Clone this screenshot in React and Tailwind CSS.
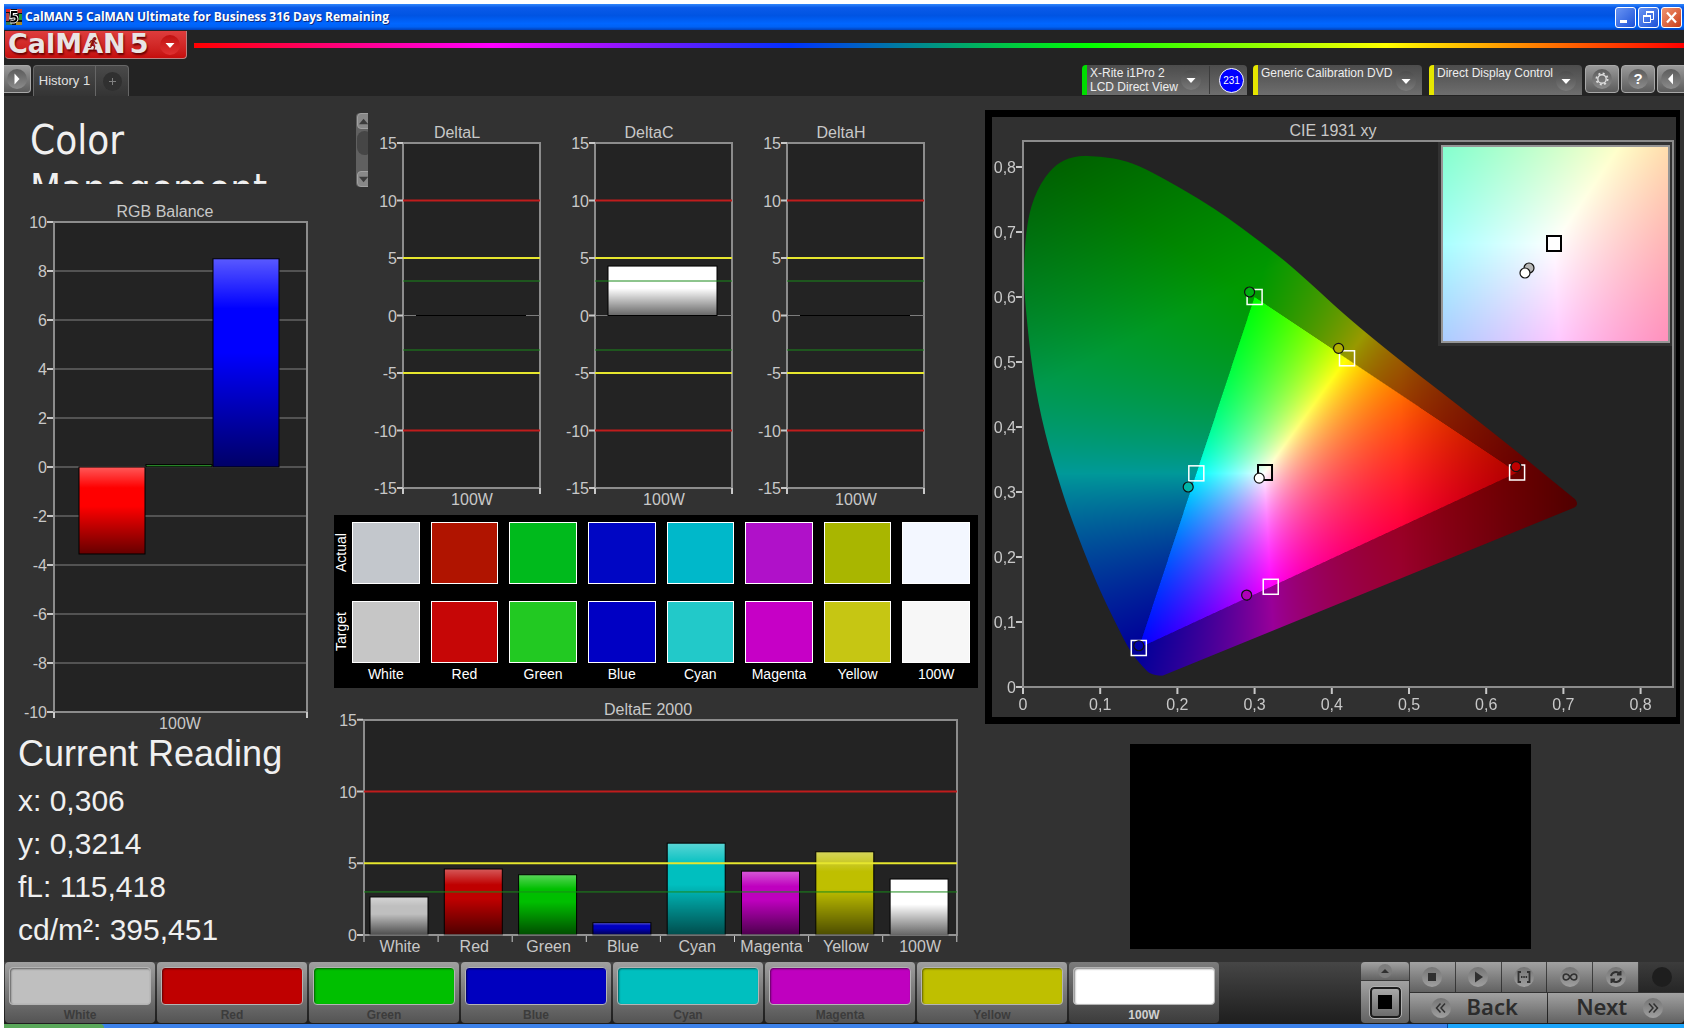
import React, { useEffect, useRef, useState } from 'react';

const UI_FONT = '"Liberation Sans", Arial, sans-serif';

const PATCHES = [
  { name: 'White', actual: 'bg-[#c3c7cc]', target: 'bg-[#c6c6c6]', bar: 'bg-[#bfbfbf]', color: '#bfbfbf', deltaE: 2.65 },
  { name: 'Red', actual: 'bg-[#b01400]', target: 'bg-[#c60606]', bar: 'bg-[#bf0000]', color: '#bf0000', deltaE: 4.6 },
  { name: 'Green', actual: 'bg-[#00ba1c]', target: 'bg-[#22c922]', bar: 'bg-[#00bf00]', color: '#00bf00', deltaE: 4.2 },
  { name: 'Blue', actual: 'bg-[#0006c4]', target: 'bg-[#0000c4]', bar: 'bg-[#0000bf]', color: '#0000bf', deltaE: 0.86 },
  { name: 'Cyan', actual: 'bg-[#00b8ca]', target: 'bg-[#22c9c9]', bar: 'bg-[#00bfbf]', color: '#00bfbf', deltaE: 6.4 },
  { name: 'Magenta', actual: 'bg-[#b011c9]', target: 'bg-[#c600c6]', bar: 'bg-[#bf00bf]', color: '#bf00bf', deltaE: 4.45 },
  { name: 'Yellow', actual: 'bg-[#a9b600]', target: 'bg-[#c6c613]', bar: 'bg-[#bfbf00]', color: '#bfbf00', deltaE: 5.8 },
  { name: '100W', actual: 'bg-[#f3f7ff]', target: 'bg-[#f7f7f7]', bar: 'bg-white', color: '#ffffff', deltaE: 3.9 },
];

const READINGS = [
  ['x:', '0,306'],
  ['y:', '0,3214'],
  ['fL:', '115,418'],
  ['cd/m²:', '395,451'],
];

const LIMITS = [
  { value: 10, color: '#c01c1c', width: 2 },
  { value: 5, color: '#e6e62e', width: 2 },
  { value: 3, color: '#1a8a1a', width: 1 },
];

// ---------- charts ----------

const Bar = ({ x, y, width, height, color, id }) => (
  <g>
    <defs>
      <linearGradient id={id} x1="0" y1="0" x2="0" y2="1">
        <stop offset="0" stopColor="#fff" stopOpacity="0.35" />
        <stop offset="0.24" stopColor="#fff" stopOpacity="0" />
        <stop offset="0.45" stopColor="#000" stopOpacity="0" />
        <stop offset="1" stopColor="#000" stopOpacity="0.6" />
      </linearGradient>
    </defs>
    <rect x={x} y={y} width={width} height={height} fill={color} />
    <rect x={x} y={y} width={width} height={height} fill={`url(#${id})`} stroke="#000" strokeWidth="1" />
  </g>
);

const YAxis = ({ ticks, left, toY }) => (
  <g>
    {ticks.map((t) => (
      <g key={t}>
        <line x1={left - 6} x2={left} y1={toY(t)} y2={toY(t)} stroke="#c8c8c8" strokeWidth="2" />
        <text x={left - 6} y={toY(t) + 6} textAnchor="end">{String(t).replace('.', ',')}</text>
      </g>
    ))}
  </g>
);

const Chart = ({ width, height, label, children }) => (
  <svg viewBox={`0 0 ${width} ${height}`} className="block w-full" role="img" aria-label={label} fontFamily={UI_FONT} fontSize="16" fill="#c8c8c8">
    {children}
  </svg>
);

const RgbBalance = () => {
  const toY = (v) => 283 - v * 24.5;
  const bars = [
    { id: 'rgb-r', x: 75, value: -3.55, color: '#ff0000' },
    { id: 'rgb-g', x: 142, value: 0.1, color: '#2a8a2a' },
    { id: 'rgb-b', x: 209, value: 8.5, color: '#0000ff' },
  ];
  return (
    <Chart width={330} height={548} label="RGB Balance">
      <text x="161" y="33" textAnchor="middle">RGB Balance</text>
      <rect x="50" y="38" width="253" height="490" fill="#232323" />
      {[8, 6, 4, 2, 0, -2, -4, -6, -8].map((v) => (
        <line key={v} x1="50" x2="303" y1={toY(v)} y2={toY(v)} stroke="#848484" strokeWidth="1" />
      ))}
      <rect x="50" y="38" width="253" height="490" fill="none" stroke="#8c8c8c" strokeWidth="2" />
      <YAxis ticks={[10, 8, 6, 4, 2, 0, -2, -4, -6, -8, -10]} left={49} toY={toY} />
      {bars.map((b) => (
        <Bar key={b.id} id={b.id} x={b.x} width={66} color={b.color} y={Math.min(toY(b.value), toY(0))} height={Math.abs(b.value) * 24.5} />
      ))}
      <path d="M50 528v6M303 528v6" stroke="#c8c8c8" strokeWidth="2" />
      <text x="176" y="545" textAnchor="middle">100W</text>
    </Chart>
  );
};

const DeltaChart = ({ title, value }) => {
  const toY = (v) => 219.5 - v * 11.5;
  return (
    <div className="flex-1">
      <Chart width={192} height={419} label={title}>
        <text x="89" y="42" textAnchor="middle">{title}</text>
        <rect x="35" y="47" width="137" height="345" fill="#232323" stroke="#8c8c8c" strokeWidth="2" />
        <line x1="35" x2="172" y1={toY(0)} y2={toY(0)} stroke="#7c7c7c" />
        <YAxis ticks={[15, 10, 5, 0, -5, -10, -15]} left={35} toY={toY} />
        {value > 0 ? (
          <Bar id={`bar-${title}`} x={48} width={109} color="#fff" y={toY(value)} height={value * 11.5} />
        ) : (
          <line x1="48" x2="158" y1={toY(0)} y2={toY(0)} stroke="#000" strokeWidth="1" />
        )}
        {LIMITS.map((l) => (
          <g key={l.value} stroke={l.color} strokeWidth={l.width}>
            <line x1="35" x2="172" y1={toY(l.value)} y2={toY(l.value)} />
            <line x1="35" x2="172" y1={toY(-l.value)} y2={toY(-l.value)} />
          </g>
        ))}
        <path d="M35 392v6M172 392v6" stroke="#c8c8c8" strokeWidth="2" />
        <text x="104" y="409" textAnchor="middle">100W</text>
      </Chart>
    </div>
  );
};

const DeltaE = () => {
  const toY = (v) => 247 - v * 14.35;
  return (
    <Chart width={651} height={274} label="DeltaE 2000">
      <text x="314" y="27" textAnchor="middle">DeltaE 2000</text>
      <rect x="30" y="32" width="593" height="215" fill="#232323" stroke="#8c8c8c" strokeWidth="2" />
      <YAxis ticks={[15, 10, 5, 0]} left={29} toY={toY} />
      {PATCHES.map((p, i) => (
        <g key={p.name}>
          <Bar id={`de-${p.name}`} x={36 + i * 74.3} width={58} color={p.color} y={toY(p.deltaE)} height={p.deltaE * 14.35} />
          <text x={66 + i * 74.3} y="264" textAnchor="middle">{p.name}</text>
        </g>
      ))}
      <line x1="30" x2="623" y1="247" y2="247" stroke="#9c9c9c" />
      {LIMITS.map((l) => (
        <line key={l.value} x1="30" x2="623" y1={toY(l.value)} y2={toY(l.value)} stroke={l.color} strokeWidth={l.width} />
      ))}
      {[0, 1, 2, 3, 4, 5, 6, 7, 8].map((i) => (
        <line key={i} x1={30 + i * 74.1} x2={30 + i * 74.1} y1="248" y2="254" stroke="#c8c8c8" strokeWidth="1" />
      ))}
    </Chart>
  );
};

// ---------- chromaticity ----------

// horseshoe outline, xy coordinates, from the blue end round to the red end
const LOCUS = [
  [0.181, 0.0175], [0.167, 0.0175], [0.155, 0.031], [0.1385, 0.055], [0.1185, 0.102], [0.099, 0.15], [0.08, 0.205],
  [0.0655, 0.25], [0.052, 0.295], [0.028, 0.39], [0.012, 0.485], [0.003, 0.5877], [0.0005, 0.64], [0.005, 0.716],
  [0.0175, 0.765], [0.04, 0.803], [0.067, 0.8175], [0.1, 0.8165], [0.133, 0.81], [0.1665, 0.793], [0.2485, 0.737],
  [0.3186, 0.675], [0.3536, 0.6415], [0.441, 0.546], [0.611, 0.39], [0.715, 0.289],
];

const TARGETS = [[0.3, 0.6], [0.4197, 0.5057], [0.2245, 0.3287], [0.64, 0.33], [0.3209, 0.1542], [0.15, 0.06]];

const MEASURED = [
  { x: 0.2935, y: 0.6077, color: '#00ae10' },
  { x: 0.4088, y: 0.521, color: '#b0b000' },
  { x: 0.214, y: 0.3077, color: '#00b4a8' },
  { x: 0.6386, y: 0.339, color: '#bf0000' },
  { x: 0.2897, y: 0.1415, color: '#b000b8' },
  { x: 0.15, y: 0.0635, color: '#0000a8' },
  { x: 0.306, y: 0.3214, color: '#ffffff' },
];

const chromaColor = (x, y) => {
  const z = 1 - x - y;
  let r = 3.2406 * x - 1.5372 * y - 0.4986 * z;
  let g = -0.9689 * x + 1.8758 * y + 0.0415 * z;
  let b = 0.0557 * x - 0.204 * y + 1.057 * z;
  // outside Rec.709 the colour is clipped and dimmed
  const dim = r < 0 || g < 0 || b < 0 ? 0.6 : 1;
  r = Math.max(0, r);
  g = Math.max(0, g);
  b = Math.max(0, b);
  const redFall = Math.max(0, x - 0.49) * 2.1;
  const greenFall = Math.max(0, y - x * 0.6 - 0.45) * 1.1;
  const k = (255 * dim * (1 - redFall) * (1 - greenFall)) / Math.max(r, g, b);
  return [r * k, g * k, b * k];
};

const ChromaField = ({ width, height, xRange, yRange, locus }) => {
  const ref = useRef(null);

  useEffect(() => {
    const canvas = ref.current;
    const w = canvas.width;
    const h = canvas.height;
    const ctx = canvas.getContext('2d');
    const img = ctx.createImageData(w, h);
    for (let j = 0; j < h; j++) {
      const y = yRange[1] - ((j + 0.5) / h) * (yRange[1] - yRange[0]);
      for (let i = 0; i < w; i++) {
        const x = xRange[0] + ((i + 0.5) / w) * (xRange[1] - xRange[0]);
        const c = chromaColor(x, y);
        const o = (j * w + i) * 4;
        img.data[o] = c[0];
        img.data[o + 1] = c[1];
        img.data[o + 2] = c[2];
        img.data[o + 3] = 255;
      }
    }
    ctx.putImageData(img, 0, 0);

    if (locus) {
      const pts = locus.map(([x, y]) => [
        ((x - xRange[0]) / (xRange[1] - xRange[0])) * w,
        ((yRange[1] - y) / (yRange[1] - yRange[0])) * h,
      ]);
      ctx.globalCompositeOperation = 'destination-in';
      ctx.beginPath();
      ctx.moveTo(pts[0][0], pts[0][1]);
      for (let i = 1; i < pts.length - 1; i++) {
        const mx = (pts[i][0] + pts[i + 1][0]) / 2;
        const my = (pts[i][1] + pts[i + 1][1]) / 2;
        ctx.quadraticCurveTo(pts[i][0], pts[i][1], mx, my);
      }
      const last = pts[pts.length - 1];
      ctx.lineTo(last[0], last[1]);
      ctx.quadraticCurveTo(last[0] + 10, last[1] + 12, last[0] - 4, last[1] + 18);
      ctx.closePath();
      ctx.fill();
    }
  }, [xRange, yRange, locus]);

  return <canvas ref={ref} width={width * 2} height={height * 2} className="block h-full w-full" />;
};

const PLOT_X = [0, 0.842];
const PLOT_Y = [0, 0.84];
const INSET_X = [0.287, 0.339];
const INSET_Y = [0.3039, 0.3539];

const CieChart = () => {
  const toX = (x) => 31 + x * 772;
  const toY = (y) => 570 - y * 650;
  return (
    <Chart width={684} height={600} label="CIE 1931 xy">
      <text x="341" y="19" textAnchor="middle">CIE 1931 xy</text>
      <rect x="31" y="24" width="650" height="546" fill="#232323" stroke="#8c8c8c" strokeWidth="2" />
      <foreignObject x="31" y="24" width="650" height="546">
        <ChromaField width={650} height={546} xRange={PLOT_X} yRange={PLOT_Y} locus={LOCUS} />
      </foreignObject>
      <path d="M31 570H681" stroke="#8c8c8c" strokeWidth="2" />
      <YAxis ticks={[0.8, 0.7, 0.6, 0.5, 0.4, 0.3, 0.2, 0.1, 0]} left={30} toY={toY} />
      {[0, 0.1, 0.2, 0.3, 0.4, 0.5, 0.6, 0.7, 0.8].map((v) => (
        <g key={v}>
          <line x1={toX(v)} x2={toX(v)} y1="571" y2="577" stroke="#c8c8c8" strokeWidth="2" />
          <text x={toX(v)} y="593" textAnchor="middle">{String(v).replace('.', ',')}</text>
        </g>
      ))}

      {TARGETS.map(([x, y]) => (
        <rect key={x} x={toX(x) - 7.5} y={toY(y) - 7.5} width="15" height="15" fill="none" stroke="#fff" strokeWidth="1.5" />
      ))}
      <rect x={toX(0.3135) - 7} y={toY(0.33) - 7.5} width="14" height="15" fill="none" stroke="#000" strokeWidth="2" />
      {MEASURED.map((m) => (
        <circle key={m.x} cx={toX(m.x)} cy={toY(m.y)} r="5" fill={m.color} stroke="#111" strokeWidth="1.2" />
      ))}

      {/* magnified view round the white point */}
      <rect x="446" y="25" width="234" height="204" fill="#323232" />
      <foreignObject x="450" y="29" width="227" height="196">
        <ChromaField width={227} height={196} xRange={INSET_X} yRange={INSET_Y} />
      </foreignObject>
      <rect x="450" y="29" width="227" height="196" fill="none" stroke="#969696" strokeWidth="2" />
      <rect x="555" y="119" width="14" height="15" fill="#fff" stroke="#000" strokeWidth="2" />
      <circle cx="537" cy="151" r="5" fill="#b8b8b8" stroke="#111" strokeWidth="1.2" />
      <circle cx="533" cy="156" r="5" fill="#fff" stroke="#111" strokeWidth="1.2" />
    </Chart>
  );
};

// ---------- window chrome ----------

const TitleBar = () => (
  <header className="flex h-[26px] items-center justify-between bg-[linear-gradient(#2f86fb_0%,#0a5ae8_14%,#0054e3_45%,#0066ff_75%,#0062f5_88%,#0040b8_100%)] pl-0.5 pr-0.5">
    <div className="flex items-center gap-[3px]">
      <svg width="16" height="16" viewBox="0 0 16 16">
        <rect width="16" height="16" fill="#111" />
        <path d="M0 0h5v3H0z" fill="#d22" />
        <path d="M11 0h5v4h-5z" fill="#c33" />
        <path d="M0 4h3v8H0z" fill="#b44" />
        <path d="M13 5h3v6h-3z" fill="#293" />
        <path d="M0 13h6v3H0z" fill="#375" />
        <path d="M10 13h6v3h-6z" fill="#a82" />
        <path d="M11.500 3H6L5.500 7.800Q10.500 6.400 10.500 10 10.500 13.200 4.500 12.500" fill="none" stroke="#fff" strokeWidth="4" />
        <path d="M11.500 3H6L5.500 7.800Q10.500 6.400 10.500 10 10.500 13.200 4.500 12.500" fill="none" stroke="#000" strokeWidth="2" />
      </svg>
      <h1 className="font-['Open_Sans',sans-serif] text-xs font-bold text-white [text-shadow:1px_1px_#0a2a80]">
        CalMAN 5 CalMAN Ultimate for Business 316 Days Remaining
      </h1>
    </div>
    <div className="flex gap-0.5">
      <button type="button" aria-label="Minimize" className="h-[21px] w-[21px] rounded-[3px] border border-white bg-linear-to-br from-[#6a94f2] to-[#1c50d8]">
        <svg viewBox="0 0 19 19"><path d="M4 12h7v3H4z" fill="#fff" /></svg>
      </button>
      <button type="button" aria-label="Restore" className="h-[21px] w-[21px] rounded-[3px] border border-white bg-linear-to-br from-[#6a94f2] to-[#1c50d8]">
        <svg viewBox="0 0 19 19" fill="none" stroke="#fff">
          <path d="M7.500 7V4.500h7v7H12" />
          <path d="M7 4h8" strokeWidth="2" />
          <path d="M4.500 8.500h7v6h-7z" />
          <path d="M4 8h8" strokeWidth="2" />
        </svg>
      </button>
      <button type="button" aria-label="Close" className="h-[21px] w-[21px] rounded-[3px] border border-white bg-linear-to-br from-[#f0936f] to-[#c93a12]">
        <svg viewBox="0 0 19 19"><path d="M5 4.500l9 10M14 4.500l-9 10" stroke="#fff" strokeWidth="2.200" /></svg>
      </button>
    </div>
  </header>
);

const RoundArrow = ({ d = 'M5.500 8h9l-4.500 5z', size = 'h-5 w-5', tone = 'from-[#4c4c4c] to-[#7a7a7a]' }) => (
  <span className={`block shrink-0 rounded-full bg-linear-to-b ${size} ${tone}`}>
    <svg viewBox="0 0 20 20"><path d={d} fill="#fff" /></svg>
  </span>
);

const BrandRow = () => (
  <div className="flex items-start gap-[7px] bg-[#232323]">
    <button type="button" className="relative ml-px flex h-7 w-[182px] items-center justify-between overflow-hidden rounded-b border-b border-r border-[#b98080] bg-linear-to-b from-[#dd3c3c] to-[#c60c0c] pl-[3px] pr-1.5">
      <span className="-mt-0.5 font-['DejaVu_Sans',sans-serif] text-[27px] leading-7 font-bold text-[#e9e4e4] [text-shadow:1px_2px_2px_#6b0000]">
        CalMAN<span className="pl-1">5</span>
      </span>
      <svg className="absolute left-[82px] top-1.5 h-3.5 w-3" viewBox="0 0 14 16" fill="none" stroke="#8a1414" strokeWidth="1.500">
        <circle cx="9" cy="2" r="1.300" fill="#8a1414" />
        <path d="M8 4L6 9l3 2-1 4M6 9l-2 3H1M3 7l2-3h3l2 3h2" />
      </svg>
      <RoundArrow tone="from-[#c01010] to-[#e03030]" />
    </button>
    <div className="mt-3 h-[5px] flex-1 bg-[linear-gradient(to_right,#ff0000,#ff00ff_20%,#0030ff_40%,#00ff00_60%,#ffff00_80%,#ff0000)]" />
  </div>
);

const SourceSelect = ({ label, width }) => (
  <div className={`relative flex h-[30px] items-center rounded-t border-l-[5px] border-l-[#e6e600] bg-linear-to-b from-[#4c4c4c] to-[#6e6e6e] ${width}`}>
    <select aria-label={label} className="h-[30px] w-full appearance-none bg-transparent pb-3.5 pl-[3px] text-xs leading-3.5 text-[#eeeeee]">
      <option>{label}</option>
    </select>
    <span className="pointer-events-none absolute right-1.5 top-1.5"><RoundArrow /></span>
  </div>
);

const SQUARE_BTN = 'flex h-7 shrink-0 items-center justify-center border border-[#a8a8a8] bg-linear-to-b from-[#9a9a9a] to-[#5c5c5c]';

const Toolbar = () => (
  <div className="flex items-start justify-between bg-[#232323] pt-1.5">
    <div className="flex items-start">
      <button type="button" aria-label="Show workflow" className={`${SQUARE_BTN} w-[27px] rounded-r border-l-0`}>
        <RoundArrow d="M7.500 4.500v11l5-5.500z" tone="from-[#5c5c5c] to-[#8c8c8c]" />
      </button>
      <div className="ml-0.5 flex h-[31px] rounded-t border border-b-0 border-[#666666] bg-linear-to-b from-[#4a4a4a] to-[#343434]">
        <button type="button" className="w-[62px] border-r border-[#666666] text-[13px] text-[#e0e0e0]">History 1</button>
        <button type="button" aria-label="New tab" className="flex w-8 items-center justify-center">
          <span className="block h-[19px] w-[19px] rounded-full bg-[#303030]">
            <svg viewBox="0 0 19 19"><path d="M6 9.500h7M9.500 6v7" stroke="#808080" /></svg>
          </span>
        </button>
      </div>
    </div>

    <div className="flex items-start">
      <div className="flex h-[30px] items-center rounded-t border-l-[5px] border-l-[#00dd00] bg-linear-to-b from-[#4c4c4c] to-[#6e6e6e]">
        <button type="button" aria-haspopup="listbox" className="flex w-[123px] items-center justify-between border-r border-[#3c3c3c] pl-[3px] pr-2 text-left text-xs leading-3.5 text-[#eeeeee]">
          <span>X-Rite i1Pro 2<br />LCD Direct View</span>
          <RoundArrow />
        </button>
        <div className="flex w-[37px] justify-end pr-[3px]">
          <span className="flex h-[25px] w-[25px] items-center justify-center rounded-full border border-white bg-[#0000ff] text-[10px] text-white">231</span>
        </div>
      </div>
      <div className="ml-1.5"><SourceSelect label="Generic Calibration DVD" width="w-[169px]" /></div>
      <div className="ml-[7px]"><SourceSelect label="Direct Display Control" width="w-[153px]" /></div>
      <button type="button" aria-label="Settings" className={`${SQUARE_BTN} ml-[3px] w-[34px] rounded`}>
        <span className="block h-5 w-5 rounded-full bg-linear-to-b from-[#5c5c5c] to-[#8c8c8c]">
          <svg viewBox="0 0 20 20" fill="none" stroke="#dddddd">
            <circle cx="10" cy="10" r="4.200" strokeWidth="1.400" />
            <circle cx="10" cy="10" r="5.600" strokeWidth="1.800" strokeDasharray="2 2.400" />
          </svg>
        </span>
      </button>
      <button type="button" aria-label="Help" className={`${SQUARE_BTN} ml-0.5 w-[34px] rounded`}>
        <span className="flex h-5 w-5 items-center justify-center rounded-full bg-linear-to-b from-[#5c5c5c] to-[#8c8c8c] text-[15px] font-bold text-white">?</span>
      </button>
      <button type="button" aria-label="Collapse" className={`${SQUARE_BTN} ml-0.5 w-[27px] rounded-l border-r-0`}>
        <RoundArrow d="M12 4.500v11l-5-5.500z" tone="from-[#5c5c5c] to-[#8c8c8c]" />
      </button>
    </div>
  </div>
);

const TitleScroller = () => (
  <div className="mt-[17px] ml-[22px] flex h-[74px] w-3 shrink-0 flex-col justify-between overflow-hidden rounded-l-sm bg-[#606060]">
    <button type="button" aria-label="Scroll up" className="ml-px h-4 w-[15px] rounded border border-[#a0a0a0] bg-[#888888]">
      <svg viewBox="0 0 14 14"><path d="M1 10l5-6 5 6z" fill="#3c3c3c" /></svg>
    </button>
    <span className="mb-3.5 ml-px h-6 w-[15px] rounded-lg bg-[#464646]" />
    <button type="button" aria-label="Scroll down" className="ml-px h-4 w-[15px] rounded border border-[#a0a0a0] bg-[#888888]">
      <svg viewBox="0 0 14 14"><path d="M1 4l5 6 5-6z" fill="#3c3c3c" /></svg>
    </button>
  </div>
);

const SwatchPanel = () => (
  <div className="mr-[7px] flex h-[173px] gap-1 bg-black pt-[7px] pr-2 text-sm text-white">
    <div className="flex w-3.5 shrink-0 flex-col gap-[17px]">
      <span className="flex h-[62px] items-center justify-center leading-3.5 [writing-mode:vertical-rl] rotate-180">Actual</span>
      <span className="flex h-[62px] items-center justify-center leading-3.5 [writing-mode:vertical-rl] rotate-180">Target</span>
    </div>
    <div className="grid flex-1 grid-cols-8 gap-x-[11px]">
      {PATCHES.map((p) => (
        <div key={p.name}>
          <div className={`h-[62px] border border-white ${p.actual}`} />
          <div className={`mt-[17px] h-[62px] border border-white ${p.target}`} />
          <div className="pt-0.5 text-center leading-[18px]">{p.name}</div>
        </div>
      ))}
    </div>
  </div>
);

// ---------- bottom bar ----------

const RoundIcon = ({ children }) => (
  <span className="block h-5 w-5 shrink-0 rounded-full bg-linear-to-b from-[#747474] to-[#a0a0a0]">
    <svg viewBox="0 0 20 20" fill="none" stroke="#303030" strokeWidth="1.500">{children}</svg>
  </span>
);

const TRANSPORT = [
  { name: 'Stop', icon: <path d="M6 6h8v8H6z" fill="#303030" stroke="none" /> },
  { name: 'Read', icon: <path d="M7 4.500v11l8-5.500z" fill="#303030" stroke="none" /> },
  { name: 'Read series', icon: <path d="M7 5H4.500v10H7M13 5h2.500v10H13M7 10h1.500M9.300 10h1.500M11.600 10h1.500" strokeWidth="1.800" /> },
  { name: 'Read continuous', icon: <path d="M10 10C8.500 7.500 7.500 7 6.200 7a3 3 0 000 6C7.500 13 8.500 12.500 10 10s2.500-3 3.800-3a3 3 0 010 6C12.500 13 11.500 12.500 10 10z" /> },
  { name: 'Refresh', icon: <path d="M5 9a5 5 0 018.500-2.500M15 11a5 5 0 01-8.500 2.500M14.500 4v3.500H11M5.500 16v-3.500H9" strokeWidth="2" /> },
];

const KEY = 'flex items-center justify-center bg-linear-to-b from-[#a2a2a2] to-[#626262]';

const BottomBar = () => {
  const [selected, setSelected] = useState('100W');
  return (
    <footer className="flex h-[62px] items-start justify-between bg-linear-to-b from-[#464646] to-[#1e1e1e]">
      <div className="flex flex-1 gap-0.5 pl-px">
        {PATCHES.map((p) => (
          <button
            key={p.name}
            type="button"
            onClick={() => setSelected(p.name)}
            className={`h-[61px] max-w-[150px] flex-1 rounded bg-linear-to-b px-1 pt-1 text-xs font-bold ${selected === p.name ? 'from-[#7c7c7c] to-[#3c3c3c] text-[#d0d0d0]' : 'from-[#a0a0a0] to-[#545454] text-[#3c3c3c]'}`}
          >
            <span className={`block h-[38px] rounded border border-[#b4b4b4] shadow-[inset_1px_1px_2px_rgba(0,0,0,0.5)] ${p.bar}`} />
            <span className="block pt-0.5 leading-4">{p.name}</span>
          </button>
        ))}
      </div>

      <div className="flex h-[61px] gap-px">
        <div className="flex w-12 flex-col gap-px">
          <button type="button" aria-label="Expand pattern list" className={`${KEY} h-[18px] rounded-t`}>
            <span className="block h-3.5 w-3.5 rounded-full bg-[#7c7c7c]">
              <svg viewBox="0 0 14 14"><path d="M3 9l4-4 4 4z" fill="#303030" /></svg>
            </span>
          </button>
          <button type="button" aria-label="Pattern window" className={`${KEY} flex-1 rounded-b`}>
            <span className="flex h-[31px] w-[31px] items-center justify-center rounded border-2 border-[#1c1c1c] bg-linear-to-b from-[#a8a8a8] to-[#6c6c6c] outline outline-[#b0b0b0]">
              <span className="h-3.5 w-3.5 bg-black" />
            </span>
          </button>
        </div>
        <div className="flex w-[274px] flex-col gap-px">
          <div className="grid grid-cols-6 gap-px">
            {TRANSPORT.map((t) => (
              <button key={t.name} type="button" aria-label={t.name} className={`${KEY} h-[30px]`}>
                <RoundIcon>{t.icon}</RoundIcon>
              </button>
            ))}
            <div className="flex h-[30px] items-center justify-center bg-linear-to-b from-[#3c3c3c] to-[#262626]">
              <span className="h-5 w-5 rounded-full bg-[#1e1e1e]" />
            </div>
          </div>
          <div className="grid h-[30px] grid-cols-2 gap-px font-['Noto_Sans',sans-serif] text-[22px] leading-6 font-semibold text-[#2c2c2c]">
            <button type="button" className={`${KEY} gap-4 rounded-bl pr-2`}>
              <RoundIcon><path d="M9.500 5.500L5.500 10l4 4.500M14 5.500L10 10l4 4.500" /></RoundIcon>
              <span className="pb-1">Back</span>
            </button>
            <button type="button" className={`${KEY} gap-4 rounded-br pl-2`}>
              <span className="pb-1">Next</span>
              <RoundIcon><path d="M6 5.500l4 4.500-4 4.500M10.500 5.500l4 4.500-4 4.500" /></RoundIcon>
            </button>
          </div>
        </div>
      </div>
    </footer>
  );
};

const App = () => (
  <div className="flex min-h-screen flex-col bg-white px-1 pt-1 font-['Liberation_Sans',Arial,sans-serif]">
    <TitleBar />
    <div className="h-px bg-[#232323]" />
    <BrandRow />
    <Toolbar />

    <main className="grid flex-1 grid-cols-[330fr_651fr_695fr] items-start bg-[#323232] pr-1">
      <section>
        <h2 className="h-[88px] overflow-hidden pt-5 pl-[26px] font-['DejaVu_Sans_Condensed','DejaVu_Sans',sans-serif] text-[40px] leading-[49px] text-[#f0f0f0]">
          Color<br />Management
        </h2>
        <RgbBalance />
        <div className="pl-3.5 text-[#f0f0f0]">
          <h3 className="pb-[3px] text-4xl leading-[44px]">Current Reading</h3>
          {READINGS.map(([label, value]) => (
            <p key={label} className="text-3xl leading-[43px]">{label} {value}</p>
          ))}
        </div>
      </section>

      <section>
        <div className="flex items-start pr-[41px]">
          <TitleScroller />
          <DeltaChart title="DeltaL" value={0} />
          <DeltaChart title="DeltaC" value={4.3} />
          <DeltaChart title="DeltaH" value={0} />
        </div>
        <SwatchPanel />
        <DeltaE />
      </section>

      <section className="pt-3.5">
        <div className="border-[7px] border-r-4 border-black bg-[#303030]">
          <CieChart />
        </div>
        <div className="mt-5 mr-[149px] ml-[145px] h-[205px] bg-black" />
      </section>
    </main>

    <BottomBar />
    <div className="flex h-1 bg-[#3d82ea]">
      <div className="w-[100px] rounded-tr bg-[#5aa85a]" />
      <div className="flex-1" />
      <div className="w-[237px] border-l border-[#0a4a9a] bg-[#1ca4fa]" />
    </div>
  </div>
);

export default App;
